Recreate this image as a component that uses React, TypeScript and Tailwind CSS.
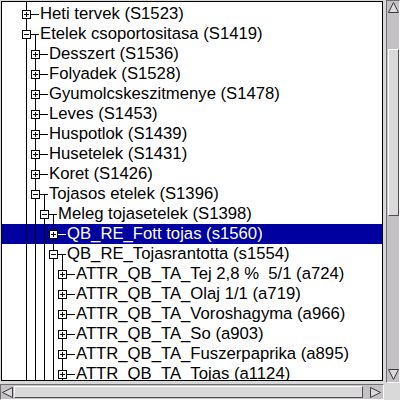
import React from 'react';

type Node = { level: number; open?: boolean; selected?: boolean; label: string };

const nodes: Node[] = [
  { level: 0, label: 'Heti tervek (S1523)' },
  { level: 0, open: true, label: 'Etelek csoportositasa (S1419)' },
  { level: 1, label: 'Desszert (S1536)' },
  { level: 1, label: 'Folyadek (S1528)' },
  { level: 1, label: 'Gyumolcskeszitmenye (S1478)' },
  { level: 1, label: 'Leves (S1453)' },
  { level: 1, label: 'Huspotlok (S1439)' },
  { level: 1, label: 'Husetelek (S1431)' },
  { level: 1, label: 'Koret (S1426)' },
  { level: 1, open: true, label: 'Tojasos etelek (S1396)' },
  { level: 2, open: true, label: 'Meleg tojasetelek (S1398)' },
  { level: 3, selected: true, label: 'QB_RE_Fott tojas (s1560)' },
  { level: 3, open: true, label: 'QB_RE_Tojasrantotta (s1554)' },
  { level: 4, label: 'ATTR_QB_TA_Tej 2,8 %  5/1 (a724)' },
  { level: 4, label: 'ATTR_QB_TA_Olaj 1/1 (a719)' },
  { level: 4, label: 'ATTR_QB_TA_Voroshagyma (a966)' },
  { level: 4, label: 'ATTR_QB_TA_So (a903)' },
  { level: 4, label: 'ATTR_QB_TA_Fuszerpaprika (a895)' },
  { level: 4, label: 'ATTR_QB_TA_Tojas (a1124)' },
];

function TreeRow({ level, open, selected, label }: Node) {
  const c = 24 + 9 * level;
  const guides = Array.from({ length: level + 1 }, (_, k) => 24 + 9 * k + 0.5);

  return (
    <div className={selected ? 'flex h-[20px] items-center bg-[#0000a0] text-white' : 'flex h-[20px] items-center text-black'}>
      <svg width={38 + 9 * level} height={20} className="shrink-0" shapeRendering="crispEdges">
        {guides.map((x) => (
          <line key={x} x1={x} x2={x} y1={0} y2={20} stroke="black" />
        ))}
        {open && <line x1={c + 9.5} x2={c + 9.5} y1={10} y2={20} stroke="black" />}
        <line x1={c + 5} x2={c + 13} y1={10.5} y2={10.5} stroke={selected ? 'white' : 'black'} />
        <rect x={c - 3.5} y={6.5} width={8} height={8} fill="white" stroke="black" />
        <line x1={c - 2} x2={c + 3} y1={10.5} y2={10.5} stroke="black" />
        {!open && <line x1={c + 0.5} x2={c + 0.5} y1={8} y2={13} stroke="black" />}
      </svg>
      <span className="whitespace-pre leading-[20px]">{label}</span>
    </div>
  );
}

function Arrow({ dir }: { dir: 'up' | 'down' | 'left' | 'right' }) {
  const pts = {
    up: '5.5,0.5 0.5,10.5 10.5,10.5',
    down: '0.5,0.5 10.5,0.5 5.5,10.5',
    left: '0.5,5.5 10.5,0.5 10.5,10.5',
    right: '0.5,0.5 10.5,5.5 0.5,10.5',
  }[dir];
  return (
    <svg width={11} height={11} className="shrink-0">
      <polygon points={pts} fill="#d9d9d9" stroke="#3c3c3c" strokeWidth={1} />
    </svg>
  );
}

export default function App() {
  return (
    <div className="grid h-[400px] w-[400px] grid-cols-[385px_15px] grid-rows-[384px_16px] overflow-hidden bg-[#d9d9d9] font-['Liberation_Sans',Arial,sans-serif] text-[16.7px]">
      {/* tree */}
      <div className="pb-[3px] pl-px pr-[2px] pt-px">
        <div className="h-full overflow-hidden border border-black bg-white">
          <svg width={40} height={2} className="block" shapeRendering="crispEdges">
            <line x1={24.5} x2={24.5} y1={0} y2={2} stroke="black" />
          </svg>
          {nodes.map((n, i) => (
            <TreeRow key={i} {...n} />
          ))}
        </div>
      </div>

      {/* vertical scrollbar */}
      <div className="ml-px flex h-[383px] flex-col items-center border border-[#6e6e6e] border-b-white border-r-white bg-[#c3c1c3] py-px">
        <Arrow dir="up" />
        <div className="mt-[36px] h-[167px] w-[11px] border border-[#505050] border-l-white border-t-white bg-[#d9d9d9]" />
        <div className="flex-1" />
        <div className="mb-px">
          <Arrow dir="down" />
        </div>
      </div>

      {/* horizontal scrollbar */}
      <div className="flex h-[16px] w-[384px] items-center border border-[#6e6e6e] border-b-white border-r-white bg-[#c3c1c3]">
        <div className="ml-px">
          <Arrow dir="left" />
        </div>
        <div className="ml-px h-[12px] w-[349px] border border-[#505050] border-l-white border-t-white bg-[#d9d9d9]" />
        <div className="flex-1" />
        <div className="mr-[2px]">
          <Arrow dir="right" />
        </div>
      </div>

      <div />
    </div>
  );
}
